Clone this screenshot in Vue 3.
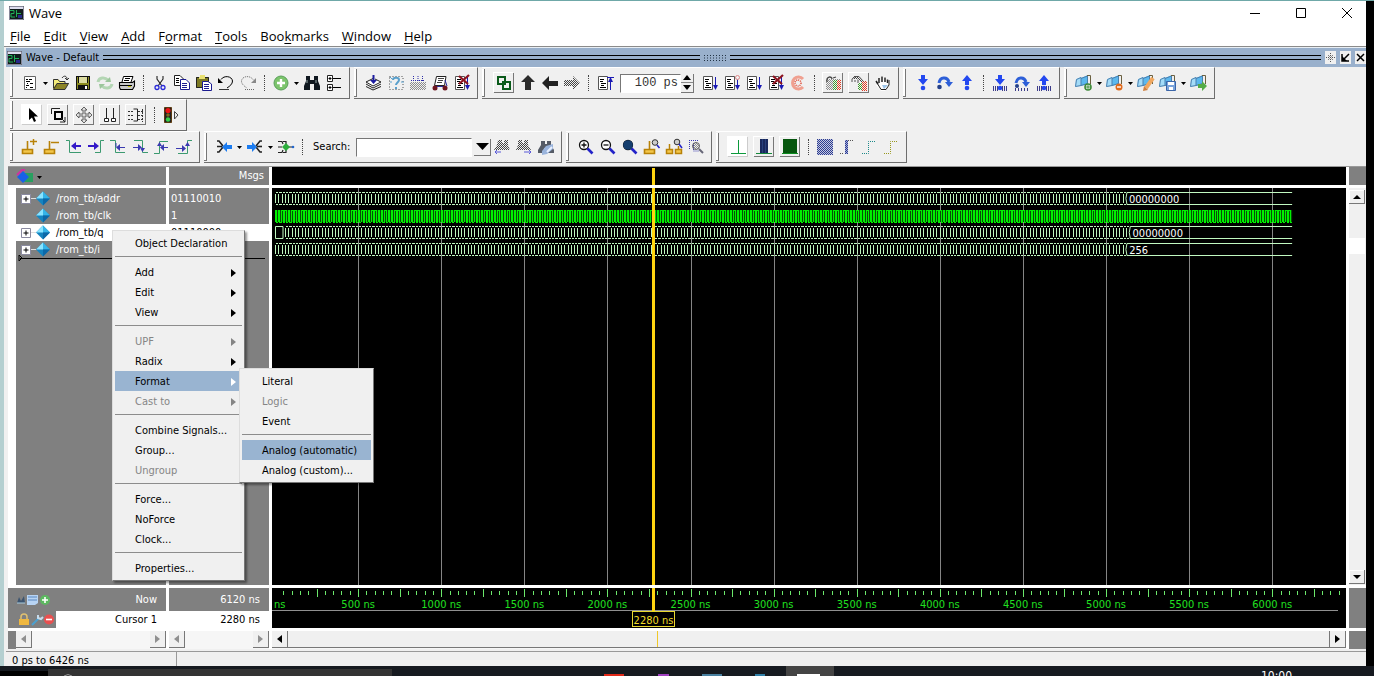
<script setup>
const n = (x) => Math.round(x * 100) / 100

/* ---------- icons ---------- */
const line = (d, c = '#000', w = 1) => `<path d="${d}" fill="none" stroke="${c}" stroke-width="${w}"/>`
const fill = (d, c = '#000') => `<path d="${d}" fill="${c}"/>`
const sheet = `<path d="M2.500 2.500H11.500V15.500H2.500Z" fill="#fff" stroke="#555"/>` + line('M4 5.500H8M4 7.500H7M5 9.500H10M5 11.500H8M4 13.500H10')
const downArrow = (x) => line(`M${x}.500 3V14`, '#1a1ab4') + fill(`M${x - 2} 11H${x + 3}L${x + 0.5} 16Z`, '#1a1ab4')
const flag = fill('M1 5L6 3V12L0 13Z', '#a4dcf8') + fill('M6 4L13 1V10L6 12Z', '#5bb8ee') + line('M1.500 5.500L6 3.500V11.500L.5 12.500ZM6 4.500L12.500 2V9.500L6 11.500', '#4a7fae') + line('M12 1.500H15.500V10', '#6a6040')
const post = fill('M1 11H12V16H1Z', '#f3c64a') + line('M6.500 3V11M1.500 11.500H11.500V15.500H1.500Z', '#b88208', 1.6)
const lens = '<circle cx="7" cy="7" r="4.500" fill="#fff" stroke="#111" stroke-width="1.300"/>' + line('M10.500 10.500L15.500 15.500', '#2323c8', 2.6)
const blueDown = fill('M7 1H11V5H14L9 11L4 5H7Z', '#2348f0')
const blueUp = fill('M9 1L14 7H11V11H7V7H4Z', '#2348f0')
const ball = '<circle cx="9" cy="14" r="2.300" fill="#2348f0"/>'
const bars = line('M2.500 12V17M4.500 12V17M6.500 12V17M11.500 12V17M13.500 12V17M15.500 12V17', '#3c3c8a')
const over = line('M3 9C4 3 11 2 13 8', '#2d5fd8', 3) + fill('M9 8H17L13 13Z', '#2d5fd8')
const glasses = (c) => fill('M4 3H8V6H10V3H14V7L17 12V15H11V10H7V15H1V12L4 7Z', c)
const hand = (c) => line('M4 10L2 7M5 9V4M8 8V2.500M11 8V3.500M13.500 9V5.500', c, 1.5)

const icons = {
  new: `<path d="M3.500 2.500H14.500V15.500H3.500Z" fill="#fff" stroke="#666"/>` + line('M5 5.500H7M8 5.500H11M5 7.500H9M6 9.500H7M9 9.500H12M5 11.500H8M9 13.500H12M5 13.500H6'),
  open: fill('M1 5H6L8 7H13V9H5L2 15H1Z', '#f4ec7a') + fill('M5 9H17L13 15H1Z', '#8c8426') + line('M1.500 14V5.500H6L7.500 7.500H13V9M5 9.500H16.500L13 15.500H1.500L5 9.500M10 4C12 1 15 2 15 5M13 4L15 6L17 4', '#333'),
  save: fill('M2 2H16V16H2Z', '#111') + fill('M3 3H4V15H3ZM14 3H15V15H14ZM4 10H14V11H4Z', '#8c8c1e') + fill('M5 3H13V9H5Z', '#dcdca0') + fill('M11 12H13V15H11Z', '#fff') + fill('M3 9H15V11H3Z', '#8c8c1e'),
  refresh: line('M2 8C3 3 9 3 12 6M16 10C15 15 9 15 6 12', '#b4d6b4', 3) + fill('M9 8L15 8L14 3Z', '#9cc69c') + fill('M9 10L3 10L4 15Z', '#9cc69c'),
  print: fill('M5 2H15L13 8H4Z', '#fff') + line('M5.500 2.500H15L13 8M5.500 2.500L4 8M7 4.500H12M6 6.500H11') + fill('M2 8H16V13L14 15H2Z', '#c9c9c9') + line('M1.500 8.500H14.500L16.500 7V12L14.500 15.500H2.500L1.500 13.500ZM2 11.500H14', '#000', 1.1) + fill('M10 12H13V13H10Z', '#c8c800'),
  cut: line('M6 2V5L11 12M12 2V5L7 12', '#222', 1.1) + '<circle cx="6" cy="13.500" r="2" fill="none" stroke="#2a2ad8" stroke-width="1.300"/><circle cx="12" cy="13.500" r="2" fill="none" stroke="#2a2ad8" stroke-width="1.300"/>',
  copy: `<path d="M1.500 1.500H7L10.500 5V11.500H1.500Z" fill="#fff" stroke="#222"/><path d="M7.500 5.500H13L16.500 9V15.500H7.500Z" fill="#fff" stroke="#1c1c90"/>` + line('M3 4.500H6M3 6.500H6M3 8.500H6') + line('M9 9.500H14M9 11.500H14M9 13.500H14', '#1c1c90'),
  paste: fill('M1 3H14V14H1Z', '#7d7a24') + line('M1.500 3.500H13.500V13.500H1.500Z', '#222') + fill('M5 1H10V5H4V3H5Z', '#e8e070') + '<path d="M7.500 7.500H13L16.500 10V16.500H7.500Z" fill="#fff" stroke="#1c1c90"/>' + line('M9 10.500H14M9 12.500H14M9 14.500H14', '#1c1c90'),
  undo: line('M4 5.500C7 1 15 2 15.500 7C15.500 10 13 12 10 14') + fill('M1 9V4L6 9Z') + line('M2 15.500H12', '#333'),
  redo: `<g stroke-dasharray="1 1">${line('M14 5.500C11 1 3 2 2.500 7C2.500 10 5 12 8 14M6 15.500H16', '#666')}</g>` + fill('M17 9V4L12 9Z', '#888'),
  add: '<circle cx="9" cy="9" r="7" fill="#7cc46c" stroke="#5aa05a"/>' + line('M9 5V13M5 9H13', '#fff', 2.4),
  find: fill('M3 2H7V6H11V2H15V7L17 12V16H11V10H7V16H1V12L3 7Z', '#101820') + line('M4 6V9M13 6V9', '#9aa'),
  tree: '<path d="M2.500 1.500H7.500V7.500H2.500ZM2.500 10.500H7.500V16.500H2.500Z" fill="#fff" stroke="#222"/>' + line('M5 3V6M3.500 4.500H6.500M5 12V15M3.500 13.500H6.500M8 4.500H16M8 13.500H16'),
  compile: fill('M1 9L9 5L17 9L9 14Z', '#fff') + line('M1 8L8 4.500M10 5L16 8L8 12L1 8M1 10L8 14L16 10M1 12.500L8 16L16 12.500', '#222') + line('M8.500 1V8', '#1c1ca0', 2) + fill('M5 6H12L8.500 10Z', '#1c1ca0'),
  ask: `<path d="M2.500 2.500H16V15.500H2.500Z" fill="none" stroke="#555" stroke-dasharray="1 2"/>` + line('M6 6C6 3 12 3 12 6C12 8 9 9 9 11M9 13V15', '#5aa0cc', 2) + line('M3 3L5 5M3 8H5M14 8H17', '#5aa0cc'),
  rain: '<path d="M1 8H17V16H1Z" fill="url(#ck-gray)"/>' + `<g stroke-dasharray="1 1">${line('M4.500 2V8M9 2V8M13.500 2V8M2 6.500H16', '#2c2ca8')}</g>`,
  cart: '<path d="M5.500 2.500H15L13.500 11.500H3.500Z" fill="#fff" stroke="#222"/>' + line('M7 4.500H13M7 6.500H12M6 8.500H11', '#444') + line('M14 6L16 12M3 12.500H14', '#2c2ca0') + '<circle cx="4" cy="14" r="2.500" fill="#6e1620"/><circle cx="14" cy="14" r="2.500" fill="#6e1620"/>',
  stop: sheet + downArrow(14) + line('M6 2L15 10M16 1L6 10', '#8e1420', 2.2),
  link: '<path d="M3 3H10V10H3Z" fill="none" stroke="#0a5a1a" stroke-width="2"/><path d="M8 8H15V15H8Z" fill="none" stroke="#0a5a1a" stroke-width="2"/>',
  up: fill('M9 1L16 8H12V16H6V8H2Z', '#2c2c2c'),
  left: fill('M1 9L8 2V7H17V12H8V16Z', '#222'),
  right: '<path d="M17 9L10 2V6H1V12H10V16Z" fill="url(#ck-dark)"/>',
  run0: sheet + line('M14.500 6V16M11 3.500H18', '#1a1ab4') + fill('M12 8L14.500 3L17 8Z', '#1a1ab4'),
  run: sheet + downArrow(14),
  runc: sheet + downArrow(14) + '<circle cx="14.500" cy="3.500" r="2" fill="#f0f0f0" stroke="#d88"/>',
  brk: '<path d="M14 5A6 6 0 1 0 14 13" fill="none" stroke="#f0a090" stroke-width="3"/><circle cx="9" cy="9" r="3" fill="none" stroke="#e04a34" stroke-width="1.500" stroke-dasharray="1 1"/>',
  prof: '<path d="M2 5H16V16H2Z" fill="url(#ck-gray)"/><path d="M9 6H13V16H9Z" fill="url(#ck-green)"/><path d="M13 6H17V16H13Z" fill="url(#ck-red)"/>' + line('M3 8C2 2 8 2 8 5M9 4L12 3', '#444', 1.3),
  prof2: '<path d="M8 9H13V16H8Z" fill="url(#ck-green)"/><path d="M12 7H17V17H12Z" fill="url(#ck-red)"/><path d="M3 2H8L14 8H11L7 5H3Z" fill="url(#ck-dark)"/>' + line('M2 8V5L5 2.500H9L13 7M5 8V6M8 9V6', '#555'),
  hand: fill('M4 10L5 4L7 8V2H9V8L10 2.500L12 3V8L13 5L15 6V12L11 17H7L2 11Z', '#fff') + hand('#222') + line('M2.500 8L7 15.500H12L15 11V6', '#222') + fill('M8 11L14 11L10 15Z', '#9cc4e8'),
  stepin: blueDown + ball,
  stepover: over + '<circle cx="3.500" cy="13" r="2.300" fill="#24408a"/>',
  stepout: blueUp + ball,
  stepin2: blueDown + ball + bars,
  stepover2: over + '<circle cx="4" cy="12" r="2" fill="#24408a"/>' + line('M2.500 14V17M5.500 14V17M8.500 14V17M11.500 14V17M14.500 14V17', '#3c3c8a'),
  stepout2: blueUp + ball + bars,
  f1: flag + '<circle cx="13" cy="13" r="3" fill="#fff" stroke="#3d8a38" stroke-width="1.600"/>' + line('M13 11V15M11 13H15', '#3d8a38'),
  f2: flag + '<circle cx="13" cy="13" r="3.500" fill="#e06a1c"/>' + line('M11 13H15', '#fff', 1.4),
  f3: flag + line('M16 4L9 14', '#f0a860', 4) + fill('M7 12L11 16L6 17Z', '#d08040'),
  f4: flag + '<path d="M7.500 7.500H16.500V16.500H7.500Z" fill="#7aa4dc" stroke="#3c66a8"/>' + fill('M9 8H15V11H9ZM10 13H14V16H10Z', '#fff'),
  f5: flag + fill('M8 10H12V7L17 12L12 17V14H8Z', '#54ac48'),
  cursor: fill('M6 2V14L9 11.500L11 16L13 15L11 10.500H15Z'),
  zoomsel: line('M6 6H13V13H6Z', '#000', 2) + line('M2.500 8V2.500H11M12 12L16 16M16 11V16H11', '#222'),
  pan: '<path d="M9 1L12 4H10V8H14V6L17 9L14 12V10H10V14H12L9 17L6 14H8V10H4V12L1 9L4 6V8H8V4H6Z" fill="#ddd" stroke="#444" stroke-width=".8"/>',
  twoc: line('M5.500 2V13M12.500 2V13', '#222') + '<path d="M3.500 12.500H7.500V15.500H3.500ZM10.500 12.500H14.500V15.500H10.500Z" fill="#fff" stroke="#222"/>',
  edit: line('M6.500 3H10.500V15H6.500', '#222') + `<g stroke-dasharray="2 1">${line('M1 5.500H6M1 9.500H6M1 13.500H6M11 5.500H17M11 9.500H17M11 13.500H17M15.500 3V16', '#333')}</g>`,
  light: '<path d="M2.500 1.500H9.500V16.500H2.500Z" fill="#222" stroke="#5c3a10"/><circle cx="6" cy="4.500" r="2.600" fill="#f01414"/><circle cx="6" cy="9" r="1.800" fill="#806a20"/><circle cx="6" cy="13.500" r="2.200" fill="#38d048"/>' + line('M12.500 5.500L16 9L12.500 13Z', '#444'),
  cadd: post + line('M9 3.500H16M12.500 1V7', '#b88208', 1.5),
  cdel: post + line('M8 4.500H16', '#b88208', 1.5),
  prevt: line('M1 2.500H4.500V14.500H16', '#3c9a70') + line('M8 8H16', '#3418c8', 2) + fill('M6 8L11 4V12Z', '#3418c8'),
  nextt: line('M17 2.500H13.500V14.500H8', '#3c9a70') + line('M1 8H8', '#3418c8', 2) + fill('M12 8L7 4V12Z', '#3418c8'),
  pf: line('M1 2.500H6.500V14.500H16', '#3c9a70') + line('M9 9.500H16M7 5V9', '#3a3ab0') + fill('M7 9.500L11 6V13Z', '#3a3ab0'),
  nf: line('M3 2.500H11.500V14.500H17', '#3c9a70') + line('M2 9.500H9', '#3a3ab0') + fill('M11 9.500L7 6V13ZM9 10H14L11.500 14Z', '#3a3ab0'),
  pr: line('M1 15.500H6.500V3.500H15', '#3c9a70') + line('M8 9.500H15', '#3a3ab0') + fill('M7 9.500L11 6V13ZM4 8H9L6.500 4Z', '#3a3ab0'),
  nr: line('M3 15.500H12.500V2.500H17', '#3c9a70') + line('M1 10.500H9', '#3a3ab0') + fill('M11 10.500L7 7V14ZM10 8H15L12.500 4Z', '#3a3ab0'),
  merge: line('M2 3H4L8 8M2 8.500H7M2 14H4L8 9', '#222', 1.6) + fill('M7 9L12 4V7H17V11H12V14Z', '#1c7cf0'),
  split: line('M16 3H14L10 8M16 14H14L10 9', '#222', 1.6) + fill('M11 9L6 4V7H1V11H6V14Z', '#1c7cf0') + line('M11 8.500H16', '#222', 1.6),
  net: line('M1 3.500H5L6 6M1 14.500H5L6 12M1 9H5M9 4V14M12 9H16M6 3.500H9V5M6 14.500H9V13', '#222', 1.2) + fill('M9 5L13 9L9 13L5 9Z', '#2cae3c') + '<circle cx="16" cy="9" r="1.300" fill="#26c"/>',
  findp: '<path d="M5 2H9V5H11V2H15V7L17 12H1L4 7Z" fill="url(#ck-dark)"/>' + line('M2 14H8M4 12L2 14L4 16', '#5a5ad8'),
  findn: '<path d="M3 2H7V5H9V2H13V7L16 12H1L3 7Z" fill="url(#ck-dark)"/>' + line('M9 14H16M14 12L16 14L14 16', '#5a5ad8'),
  findo: glasses('#555b66') + fill('M9 8L16 6V11L10 16L5 17V13Z', '#9ab4dc') + line('M10 14L15 9', '#e8f0ff', 2),
  zin: lens + line('M4.500 7H9.500M7 4.500V9.500', '#111', 1.3),
  zout: lens + line('M4.500 7H9.500', '#111', 1.3),
  zfull: lens + '<circle cx="7" cy="7" r="4.800" fill="#153e6e"/>',
  zc: post + '<circle cx="12" cy="4.500" r="2.800" fill="#ccc" stroke="#333"/>' + line('M14 7L16.500 10', '#2323c8', 1.6),
  zc2: fill('M1 11H7V16H1ZM10 11H16V16H10Z', '#f3c64a') + line('M4.500 6V11M13.500 8V11M1.500 11.500H7.500V15.500H1.500ZM10.500 11.500H16.500V15.500H10.500Z', '#b88208', 1.5) + '<circle cx="12" cy="4" r="2.800" fill="#ccc" stroke="#333"/>' + line('M14 6L17 10', '#2323c8', 1.6),
  zsel: `<g stroke-dasharray="1 1">${line('M2 2.500H12M2.500 2V11M6.500 5V13H12', '#3a3ab0')}</g><circle cx="9" cy="8" r="3.500" fill="url(#ck-gray)" stroke="#666"/>` + line('M12 11L16 15', '#667', 2),
  w1: fill('M9 2H10V15H9ZM2 15H17V16H2Z', '#0c9a3c'),
  w2: fill('M5 1H13V16H5Z', '#19285c') + line('M7.500 1V16M10.500 1V16', '#28407c') + fill('M1 15H17V16H1Z', '#168a3c'),
  w3: fill('M2 1H16V16H2Z', '#06560e') + fill('M1 15H17V16H1Z', '#0c8c20'),
  w4: fill('M1 1H17V17H1Z', '#c4c8e0') + '<path d="M1 1H17V17H1Z" fill="url(#ck-navy)"/>',
  w5: fill('M7 2H10V16H7Z', '#a4acd8') + '<path d="M7 2H10V16H7Z" fill="url(#ck-navy)"/>' + `<g stroke-dasharray="1 1">${line('M2 15.500H6M10 2.500H15', '#555')}</g>`,
  w6: `<g stroke-dasharray="1 1">${line('M2 15.500H8.500V3.500H16', '#1c8888')}</g>`,
  w7: `<g stroke-dasharray="1 1">${line('M2 15.500H8.500V3.500H16', '#98981c')}</g>`,
}

const I = (icon, raised = false, on = false) => ({ t: 'icon', icon, raised, on })
const A = { t: 'more' }
const S = { t: 'sep' }
const toolRows = [
  [
    [I('new'), A, I('open'), I('save'), I('refresh'), I('print'), S, I('cut'), I('copy'), I('paste'), I('undo'), I('redo'), S, I('add'), A, I('find'), I('tree')],
    [I('compile'), I('ask'), I('rain'), I('cart'), I('stop')],
    [I('link', true), I('up'), I('left'), I('right'), S, I('run0'), { t: 'time' }, I('run'), I('runc'), I('run'), I('stop'), I('brk'), S, I('prof', true), I('prof2', true), I('hand')],
    [I('stepin'), I('stepover'), I('stepout'), S, I('stepin2'), I('stepover2'), I('stepout2')],
    [I('f1'), A, I('f2'), A, I('f3'), I('f4'), A, I('f5')],
  ],
  [[I('cursor', true, true), I('zoomsel', true), I('pan', true), I('twoc', true), I('edit', true), S, I('light')]],
  [
    [I('cadd'), I('cdel'), I('prevt'), I('nextt'), I('pf'), I('nf'), I('pr'), I('nr')],
    [I('merge'), A, I('split'), A, I('net'), S, { t: 'search' }, I('findp'), I('findn'), I('findo')],
    [I('zin'), I('zout'), I('zfull'), I('zc'), I('zc2'), I('zsel')],
    [I('w1', true, true), I('w2', true), I('w3', true), S, I('w4'), I('w5'), I('w6'), I('w7')],
  ],
]

/* ---------- menus ---------- */
const menubar = [['', 'F', 'ile'], ['', 'E', 'dit'], ['', 'V', 'iew'], ['', 'A', 'dd'], ['F', 'o', 'rmat'], ['', 'T', 'ools'], ['Boo', 'k', 'marks'], ['', 'W', 'indow'], ['', 'H', 'elp']]
const menu = [
  { label: 'Object Declaration' }, null,
  { label: 'Add', sub: true }, { label: 'Edit', sub: true }, { label: 'View', sub: true }, null,
  { label: 'UPF', sub: true, off: true }, { label: 'Radix', sub: true }, { label: 'Format', sub: true, on: true }, { label: 'Cast to', sub: true, off: true }, null,
  { label: 'Combine Signals...' }, { label: 'Group...' }, { label: 'Ungroup', off: true }, null,
  { label: 'Force...' }, { label: 'NoForce' }, { label: 'Clock...' }, null,
  { label: 'Properties...' },
]
const formatMenu = [{ label: 'Literal' }, { label: 'Logic', off: true }, { label: 'Event' }, null, { label: 'Analog (automatic)', on: true }, { label: 'Analog (custom)...' }]

/* ---------- signals ---------- */
const signals = [
  { name: '/rom_tb/addr', value: '01110010', bus: true },
  { name: '/rom_tb/clk', value: '1' },
  { name: '/rom_tb/q', value: '01110000', bus: true, selected: true },
  { name: '/rom_tb/i', value: '256', bus: true },
]

/* ---------- waves: 20 ns per step ---------- */
const SCALE = 0.1662
const X0 = 3
const at = (ns) => n(X0 + ns * SCALE)
const END = at(6120)
const busPath = (top, from, to) => {
  const bot = top + 12
  let d = ''
  for (let t = from; t < to; t += 20) {
    const x = Math.round(at(t))
    const next = Math.round(at(t + 20))
    d += `M${x + 0.5} ${top + 1.5}V${bot - 1.5}M${x + 1} ${top}H${next}M${x + 1} ${bot}H${next}`
  }
  const e = at(to)
  return d + `M${END} ${top}H${n(e + 1)}L${e} ${top + 6}L${n(e + 1)} ${bot}H${END}`
}
const buses = [
  { d: busPath(4.5, 0, 5120), x: at(5138), y: 15, text: '00000000' },
  { d: busPath(38.5, 60, 5140) + `M3.500 38.500H11V50.500H3.500Z`, x: at(5160), y: 49, text: '00000000' },
  { d: busPath(55.5, 0, 5120), x: at(5140), y: 66, text: '256' },
]
let clk = ''
for (let t = 0; t < 6120; t += 20) clk += `M${at(t)} 34V22H${n(at(t) + 1.6)}V34H${n(at(t) + 3.3)}`
const grid = Array.from({ length: 12 }, (_, k) => Math.round(at((k + 1) * 500)) + 0.5)
let ticks = ''
for (let t = 50; t <= 6420; t += 50) ticks += `M${Math.round(at(t)) + 0.5} ${t % 250 ? 3 : 1}V${t % 250 ? 7 : 9}`
const labels = Array.from({ length: 13 }, (_, k) => ({ x: at(k * 500), text: `${k * 500} ns` }))
const CUR = Math.round(at(2280)) - 0.5
</script>

<template>
  <div class="desktop">
    <svg class="defs" width="0" height="0" aria-hidden="true">
      <defs>
        <pattern v-for="p in [['gray', '#8c8c8c'], ['dark', '#444'], ['navy', '#2c3c90'], ['red', '#e03a22'], ['green', '#3c9c2c']]" :id="'ck-' + p[0]" :key="p[0]" width="2" height="2" patternUnits="userSpaceOnUse">
          <path d="M0 0H1V1H0ZM1 1H2V2H1Z" :fill="p[1]" />
        </pattern>
      </defs>
    </svg>

    <div class="window">
      <header class="title">
        <svg class="app" width="15" height="14" viewBox="0 0 15 14"><path d="M0 0H15V14H0Z" fill="#111c1c" /><path d="M1 4.500H5V7.500H2V11H6M7.500 4V11M8 7.500H12" stroke="#20b058" fill="none" /><path d="M9 9H13V12H9Z" fill="#28288a" /><path d="M.5 14V.5H14.500V13.500H1" stroke="#889" fill="none" /><path d="M1 1H14V3H1Z" fill="#dde" /></svg>
        <span>Wave</span>
        <div class="winbtns">
          <button aria-label="Minimize"><svg width="12" height="12"><path d="M1 6.500H11" stroke="#000" /></svg></button>
          <button aria-label="Maximize"><svg width="12" height="12"><path d="M1.500 1.500H10.500V10.500H1.500Z" fill="none" stroke="#000" /></svg></button>
          <button aria-label="Close"><svg width="12" height="12"><path d="M1 1L11 11M11 1L1 11" stroke="#000" /></svg></button>
        </div>
      </header>

      <nav class="menubar">
        <button v-for="m in menubar" :key="m.join('')">{{ m[0] }}<u>{{ m[1] }}</u>{{ m[2] }}</button>
      </nav>

      <div class="dock">
        <svg class="app" width="15" height="14" viewBox="0 0 15 14"><path d="M0 0H15V14H0Z" fill="#111c1c" /><path d="M1 4.500H5V7.500H2V11H6M7.500 4V11M8 7.500H12" stroke="#20b058" fill="none" /><path d="M9 9H13V12H9Z" fill="#28288a" /><path d="M.5 14V.5H14.500V13.500H1" stroke="#889" fill="none" /><path d="M1 1H14V3H1Z" fill="#dde" /></svg>
        <span>Wave - Default</span>
        <i class="rails"></i>
        <svg width="22" height="10"><path d="M0 2.500H22M0 5H22M0 7.500H22" stroke="#234" stroke-dasharray="1 2" /></svg>
        <i class="rails"></i>
        <button aria-label="Zoom pane"><svg width="9" height="9"><path d="M4.500 0V9M0 4.500H9M2 2L7 7M7 2L2 7" stroke="#555" stroke-dasharray="1 1" /></svg></button>
        <button aria-label="Dock"><svg width="9" height="9"><path d="M8 1L3 6M1 1V8H8" fill="none" stroke="#000" stroke-width="1.500" /><path d="M1 3V8H6Z" /></svg></button>
        <button aria-label="Close pane"><svg width="9" height="9"><path d="M1 1L8 8M8 1L1 8" stroke="#000" stroke-width="1.500" /></svg></button>
      </div>

      <div v-for="(row, r) in toolRows" :key="r" class="toolrow">
        <div v-for="(group, g) in row" :key="g" class="group">
          <template v-for="(it, k) in group" :key="k">
            <button v-if="it.t === 'icon'" class="tool" :class="{ raised: it.raised, on: it.on }" :aria-label="it.icon">
              <svg width="18" height="18" viewBox="0 0 18 18" v-html="icons[it.icon]"></svg>
            </button>
            <button v-else-if="it.t === 'more'" class="more" aria-label="More"><svg width="5" height="3"><path d="M0 0H5L2.500 3Z" /></svg></button>
            <i v-else-if="it.t === 'sep'" class="sep"></i>
            <div v-else-if="it.t === 'time'" class="time">
              <input type="text" value="100 ps" aria-label="Run length">
              <div class="spin">
                <button aria-label="Increase"><svg width="8" height="5"><path d="M4 0L8 5H0Z" /></svg></button>
                <button aria-label="Decrease"><svg width="8" height="5"><path d="M0 0H8L4 5Z" /></svg></button>
              </div>
            </div>
            <div v-else class="search">
              <label for="search">Search:</label>
              <input id="search" type="text">
              <button aria-label="Search history"><svg width="13" height="7"><path d="M0 0H13L6.500 7Z" /></svg></button>
            </div>
          </template>
        </div>
      </div>

      <main class="panes">
        <div class="head names-head">
          <svg width="18" height="14" viewBox="0 0 18 14"><path d="M8 4H17V13H8Z" fill="#28a060" /><path d="M7 2L13 8L7 14L1 8Z" fill="#1860e8" /><path d="M1 6L6 1H9" stroke="#d030a0" stroke-width="2" fill="none" /></svg>
          <svg width="5" height="3"><path d="M0 0H5L2.500 3Z" /></svg>
        </div>
        <div class="head msgs">Msgs</div>
        <div class="black"><svg class="fill"><rect :x="CUR - 1.5" y="1" width="3" height="17" fill="#ffd510" /></svg></div>
        <div class="gray"></div>

        <div class="names">
          <div v-for="s in signals" :key="s.name" class="signal" :class="{ selected: s.selected }">
            <svg width="36" height="17" viewBox="0 0 36 17">
              <g v-if="s.bus"><path d="M15 8.500H20" stroke="#ddd" /><path d="M5.500 4.500H14.500V13.500H5.500Z" fill="#fff" stroke="#8a8aa0" /><path d="M7.500 9H12.500M10 6.500V11.500" stroke="#000" /></g>
              <path d="M27 1.500L34 8.500L27 15.500L20 8.500Z" fill="#1484c0" /><path d="M27 1.500L34 8.500H27L23.500 5Z" fill="#35b4e8" /><path d="M27 1.500V8.500H20Z" fill="#8ae4ff" /><path d="M27 8.500H34L27 15.500Z" fill="#0c68a8" />
            </svg>
            <span>{{ s.name }}</span>
          </div>
          <div class="insert"><svg width="5" height="7"><path d="M1 0V6L4 3Z" fill="none" stroke="#000" /></svg></div>
        </div>
        <div class="values">
          <div v-for="s in signals" :key="s.name" class="value" :class="{ selected: s.selected }">{{ s.value }}</div>
          <div class="insert"></div>
        </div>
        <div class="black wave">
          <svg class="fill">
            <path v-for="x in grid" :key="x" :d="`M${x} 0V2000`" stroke="#858585" />
            <rect :x="X0" y="22" :width="END - X0" height="12" fill="#064e06" />
            <path :d="clk" fill="none" stroke="#00f000" shape-rendering="crispEdges" />
            <g v-for="(b, k) in buses" :key="k">
              <path :d="b.d" fill="none" stroke="#c0f8c0" />
              <text :x="b.x" :y="b.y" fill="#fff">{{ b.text }}</text>
            </g>
            <rect :x="CUR - 1.5" y="0" width="3" height="2000" fill="#ffd510" />
          </svg>
        </div>
        <div class="vscroll">
          <button aria-label="Scroll up"><svg width="8" height="4"><path d="M4 0L8 4H0Z" /></svg></button>
          <i class="thumb"></i>
          <button aria-label="Scroll down"><svg width="8" height="4"><path d="M0 0H8L4 4Z" /></svg></button>
        </div>

        <div class="foot">
          <div class="now">
            <svg width="36" height="14" viewBox="0 0 36 14"><path d="M1 10L3 4L5 8L8 3L9 10Z" fill="#3c5470" /><path d="M1 10H9" stroke="#acd" /><path d="M11 2H22V10L19 12H11Z" fill="#b8d4f4" /><path d="M12 4H21M12 7H21" stroke="#5a88c0" /><circle cx="29" cy="7" r="5" fill="#5cb860" /><path d="M29 4V10M26 7H32" stroke="#fff" stroke-width="1.600" /></svg>
            <span>Now</span>
          </div>
          <div class="cur">
            <svg width="40" height="14" viewBox="0 0 40 14"><path d="M5 6V4C5 0 11 0 11 4V6" fill="none" stroke="#e0c070" stroke-width="1.500" /><path d="M3 6H13V12H3Z" fill="#f0b840" /><path d="M16 12L23 5" stroke="#4aa0d0" stroke-width="2" /><path d="M22 2V5L25 6L27 4" stroke="#c8dcec" stroke-width="2" fill="none" /><circle cx="33" cy="6.500" r="5" fill="#e85050" /><path d="M30 6.500H36" stroke="#fff" stroke-width="1.600" /></svg>
            <span>Cursor 1</span>
          </div>
        </div>
        <div class="foot">
          <div class="now"><span>6120 ns</span></div>
          <div class="cur"><span>2280 ns</span></div>
        </div>
        <div class="black">
          <svg class="fill">
            <path :d="ticks" stroke="#6ce86c" />
            <text v-for="l in labels" :key="l.text" :x="l.x" y="20" text-anchor="middle" fill="#20e020">{{ l.text }}</text>
            <path d="M0 22.500H1066" stroke="#909090" />
            <rect :x="CUR - 1.5" y="0" width="3" height="23" fill="#ffd510" />
            <rect x="360.5" y="23.500" width="42" height="15" fill="#000" stroke="#e8d830" />
            <text :x="CUR" y="36" text-anchor="middle" fill="#f0dc28">2280 ns</text>
          </svg>
        </div>
        <div class="gray"></div>

        <div v-for="k in 3" :key="k" class="hscroll" :class="{ live: k === 3, first: k === 1 }">
          <button aria-label="Scroll left"><svg width="5" height="8"><path d="M5 0V8L0 4Z" /></svg></button>
          <i class="track"><svg v-if="k === 3" class="fill"><path d="M369.500 0V17" stroke="#f0c828" /></svg></i>
          <button aria-label="Scroll right"><svg width="5" height="8"><path d="M0 0V8L5 4Z" /></svg></button>
        </div>
        <div class="gray"></div>

        <div class="menu" role="menu">
          <template v-for="(m, k) in menu" :key="k">
            <hr v-if="!m">
            <div v-else class="entry" :class="{ on: m.on }">
              <button role="menuitem" :disabled="m.off">{{ m.label }}<svg v-if="m.sub" width="5" height="8"><path d="M0 0V8L5 4Z" /></svg></button>
              <div v-if="m.on" class="menu submenu" role="menu">
                <template v-for="(f, j) in formatMenu" :key="j">
                  <hr v-if="!f">
                  <div v-else class="entry" :class="{ on: f.on }"><button role="menuitem" :disabled="f.off">{{ f.label }}</button></div>
                </template>
              </div>
            </div>
          </template>
        </div>
      </main>

      <footer class="status"><span>0 ps to 6426 ns</span><i></i></footer>
    </div>

    <div class="taskbar">
      <svg width="100%" height="10">
        <path d="M0 5H48V10H0Z" fill="#000" /><path d="M48 3H392V10H48Z" fill="#333" /><path d="M64 10Q68 7 72 10" stroke="#999" fill="none" />
        <path d="M604 8H624V10H604Z" fill="#e02818" /><path d="M658 8H669V10H658Z" fill="#a040c0" /><path d="M702 8H722V10H702Z" fill="#4880a0" /><path d="M755 8H765V10H755Z" fill="#3080a8" />
        <path d="M786 0H834V10H786Z" fill="#444" /><path d="M797 8H820V10H797Z" fill="#fff" />
        <text x="1261" y="14" fill="#fff" font-size="12">10:00</text>
      </svg>
    </div>
  </div>
</template>

<style>
body { background: #000; }
</style>

<style scoped>
.desktop { box-sizing: border-box; min-height: 100vh; display: flex; flex-direction: column; font: 11px/16px "DejaVu Sans Condensed", "Noto Sans", sans-serif; color: #000; background: #000; border-top: 1px solid #6fa8a8; overflow: hidden; }
.defs { position: absolute; }
svg { display: block; flex: none; }
button { padding: 0; margin: 0; border: 0; background: none; font: inherit; color: inherit; display: flex; align-items: center; justify-content: center; }
input { box-sizing: border-box; border: 1px solid; border-color: #777 #fff #fff #777; background: #fff; padding: 0 2px; }
.window { flex: 1; display: flex; flex-direction: column; margin-right: 8px; background: #f0f0f0; border-left: 4px solid #b4cfd0; }
.title { display: flex; align-items: center; gap: 5px; height: 24px; padding-left: 5px; background: #fff; font: 13px/18px "Open Sans", sans-serif; }
.winbtns { margin-left: auto; display: flex; gap: 8px; }
.winbtns button { width: 38px; height: 24px; }
.menubar { display: flex; align-items: flex-start; gap: 13px; height: 22px; padding: 2px 6px 0; box-sizing: border-box; background: #fff; font: 13px/18px "Open Sans", sans-serif; border-bottom: 1px solid #8a8a8a; }
.menubar u { text-underline-offset: 2px; }
.dock { display: flex; align-items: center; gap: 4px; height: 19px; margin-left: 2px; padding-left: 1px; background: #99b0cc; border-top: 1px solid #e8eef4; }
.rails { flex: 1; height: 3px; border-top: 1px solid #000; border-bottom: 1px solid #000; }
.dock .rails:nth-of-type(1) { flex: 0 1 597px; }
.dock button { width: 11px; height: 13px; background: #f0f0f0; }
.toolrow { display: flex; height: 32px; gap: 4px; padding-left: 6px; }
.group { position: relative; box-sizing: border-box; display: flex; align-items: center; padding: 0 4px 0 9px; border-right: 1px solid #6e6e6e; border-bottom: 1px solid #6e6e6e; border-top: 1px solid #fff; }
.group::before { content: ""; position: absolute; left: 0; top: 1px; bottom: 1px; width: 2px; border-right: 1px solid #777; border-bottom: 1px solid #777; background: #fff; }
.tool { width: 22px; height: 22px; }
.tool.raised { width: 20px; height: 20px; margin: 0 3px; border-right: 1px solid #777; border-bottom: 1px solid #777; box-shadow: -1px -1px #fff; box-sizing: border-box; }
.tool.raised.on { background: #fff; border-color: #ccc; }
.more { width: 9px; height: 22px; }
.sep { width: 11px; height: 16px; display: flex; justify-content: center; }
.sep::before { content: ""; border-left: 1px dotted #444; }
.time { display: flex; padding: 0 5px 0 4px; }
.time input { width: 61px; height: 19px; text-align: right; color: #333; font: 12px/16px "Liberation Mono", monospace; }
.spin { width: 13px; display: grid; border-right: 1px solid #777; border-bottom: 1px solid #777; box-sizing: border-box; }
.spin button + button { border-top: 1px solid #888; }
.search { display: flex; align-items: center; padding-left: 5px; }
.search input { width: 116px; height: 19px; margin-left: 4px; }
.search label { width: 39px; }
.search button { width: 17px; height: 17px; margin-left: 2px; border-right: 1px solid #777; border-bottom: 1px solid #777; }
.panes { position: relative; flex: 1; margin: 3px 0 0 4px; border-top: 1px solid #999; display: grid; gap: 3px; grid-template: 18px minmax(0, 1fr) 40px 18px / 158px 100px minmax(0, 1fr) 17px; background: #fff; }
.head { display: flex; align-items: center; gap: 3px; padding: 0 8px; background: #808080; color: #fff; }
.names-head svg:last-child { margin-top: 3px; }
.msgs { justify-content: flex-end; padding-right: 5px; }
.gray { background: #808080; }
.black { background: #000; overflow: hidden; }
.fill { width: 100%; height: 100%; }
.names, .values { background: #808080; padding-top: 2px; color: #fff; }
.names { border-left: 8px solid #fff; }
.signal, .value { display: flex; align-items: center; height: 17px; }
.signal span { padding-left: 4px; }
.value { padding-left: 2px; }
.selected { background: #fff; color: #000; }
.insert { position: relative; border-top: 1px solid #000; margin-right: 4px; }
.names .insert { margin-left: 4px; margin-right: 0; }
.insert svg { position: absolute; left: -2px; top: -4px; }
.vscroll { display: flex; flex-direction: column; justify-content: space-between; padding: 2px 1px 1px 0; background: #f0f0f0; }
.vscroll button { height: 14px; border-right: 1px solid #777; border-bottom: 1px solid #777; box-shadow: inset 1px 1px #fff; }
.thumb { height: 16px; margin: 34px 0 auto; background: #fff; }
.foot { background: #808080; color: #fff; }
.now, .cur { display: flex; justify-content: flex-end; align-items: center; }
.now { height: 23px; padding-right: 9px; }
.cur { height: 17px; color: #000; }
.foot svg { margin-right: auto; margin-left: 8px; }
.cur span { box-sizing: border-box; flex: 1; background: #fff; text-align: right; padding-right: 9px; line-height: 17px; }
.cur svg { margin-right: 0; }
.hscroll { display: flex; background: #f6f6f6; fill: #909090; }
.hscroll.first { border-left: 8px solid #808080; }
.hscroll button { width: 16px; height: 17px; background: #f0f0f0; border-right: 1px solid #777; border-bottom: 1px solid #777; box-sizing: border-box; }
.hscroll.live { fill: #000; }
.track { flex: 1; }
.live .track { height: 17px; background: #f0f0f0; box-sizing: border-box; border-right: 1px solid #777; border-bottom: 1px solid #777; }
.status { display: flex; margin: 2px 0 0 2px; border-top: 1px solid #999; padding-left: 6px; height: 14px; line-height: 18px; overflow: hidden; background: #f0f0f0; }
.status span { width: 164px; }
.status i { border-left: 1px solid #999; }
.taskbar { height: 10px; background: #161a20; overflow: hidden; }
.menu { position: absolute; left: 104px; top: 63px; width: 133px; box-sizing: border-box; padding: 2px; background: #f0f0f0; color: #000; border: 1px solid; border-color: #ddd #777 #777 #ddd; box-shadow: 2px 2px 2px rgba(0, 0, 0, .4); z-index: 2; }
.entry { position: relative; }
.entry button { width: 100%; height: 20px; justify-content: space-between; padding: 2px 6px 0 20px; white-space: nowrap; }
.entry button:disabled { color: #858585; fill: #858585; }
.entry.on > button { background: #99b4d1; }
.menu > .entry.on > button > svg { fill: #fff; }
.menu hr { margin: 3px 0 5px; border: 0; border-top: 1px solid #8c8c8c; }
.submenu { left: 124px; top: -3px; width: 135px; }
</style>
